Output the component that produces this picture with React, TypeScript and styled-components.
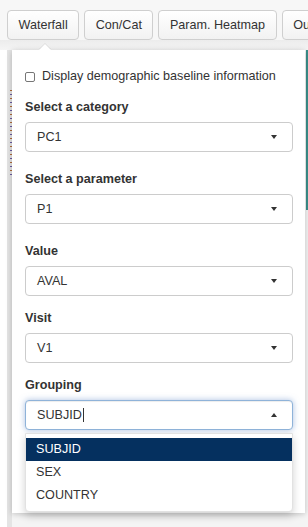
import React from "react";
import styled, { createGlobalStyle } from "styled-components";

const GlobalStyle = createGlobalStyle`
  * { box-sizing: border-box; }
  body {
    margin: 0;
    background: #f7f7f7;
    font-family: "Liberation Sans", Arial, sans-serif;
    color: #333;
    font-size: 12.6px;
  }
`;

const tabs = ["Waterfall", "Con/Cat", "Param. Heatmap", "Outliers"];

const fields = [
  { label: "Select a category", value: "PC1", gap: 17 },
  { label: "Select a parameter", value: "P1", gap: 17 },
  { label: "Value", value: "AVAL", gap: 12 },
  { label: "Visit", value: "V1", gap: 12 },
];

const options = ["SUBJID", "SEX", "COUNTRY"];

export default function App() {
  return (
    <>
      <GlobalStyle />
      <Page>
        <TabBar>
          {tabs.map((t) => (
            <TabButton key={t}>{t}</TabButton>
          ))}
        </TabBar>

        <Stage>
          <Gutter />
          <AxisStrip>
            <AxisDots />
          </AxisStrip>
          <PlotArea>
            <TealEdge />
          </PlotArea>

          <Popover>
            <Arrow />
            <CheckRow>
              <CheckBox />
              <span>Display demographic baseline information</span>
            </CheckRow>

            {fields.map((f) => (
              <Group key={f.label} $gap={f.gap}>
                <Label>{f.label}</Label>
                <SelectBox>
                  <span>{f.value}</span>
                  <Caret />
                </SelectBox>
              </Group>
            ))}

            <Group $gap={0}>
              <Label>Grouping</Label>
              <SelectBox $focused>
                <span>
                  SUBJID<Cursor />
                </span>
                <Caret $up />
              </SelectBox>
              <Dropdown>
                {options.map((o, i) => (
                  <Option key={o} $active={i === 0}>
                    {o}
                  </Option>
                ))}
              </Dropdown>
            </Group>
          </Popover>
        </Stage>
      </Page>
    </>
  );
}

const Page = styled.div`
  width: 308px;
  height: 527px;
  overflow: hidden;
  display: flex;
  flex-direction: column;
`;

const TabBar = styled.div`
  display: flex;
  gap: 5px;
  padding: 10px 0 0 7px;
  height: 40px;
  white-space: nowrap;
  overflow: hidden;
`;

const TabButton = styled.button`
  flex: none;
  height: 30px;
  padding: 0 10.5px;
  border: 1px solid #cfcfcf;
  border-radius: 4px;
  background: linear-gradient(#ffffff, #f2f2f2);
  font-family: inherit;
  font-size: 12.6px;
  color: #333;
`;

const Stage = styled.div`
  position: relative;
  flex: 1;
  display: flex;
  background: linear-gradient(#ececec 0, #f5f5f5 10px);
`;

const Gutter = styled.div`
  width: 7px;
  margin-top: 10px;
  background: #fff;
`;

const AxisStrip = styled.div`
  width: 5px;
  margin-top: 10px;
  background: #e4e4e4;
  padding-top: 40px;
  display: flex;
  justify-content: flex-end;
`;

const AxisDots = styled.div`
  width: 2px;
  height: 85px;
  background: repeating-linear-gradient(
    #b06a3a 0 1px,
    transparent 1px 4px,
    #6a5aa0 4px 5px,
    transparent 5px 8px
  );
`;

const PlotArea = styled.div`
  flex: 1;
  margin-top: 10px;
  display: flex;
  justify-content: flex-end;
  background: #f4f4f4;
`;

const TealEdge = styled.div`
  width: 2px;
  height: 160px;
  background: #3a8f8a;
`;

const Popover = styled.div`
  position: absolute;
  top: 10px;
  left: 12px;
  width: 293px;
  height: 463px;
  background: #fff;
  box-shadow: 0 1px 6px rgba(0, 0, 0, 0.22);
  padding: 16px 12px 0 13px;
`;

const Arrow = styled.div`
  position: absolute;
  top: -6px;
  left: 27px;
  width: 0;
  height: 0;
  border-left: 6px solid transparent;
  border-right: 6px solid transparent;
  border-bottom: 6px solid #fff;
  filter: drop-shadow(0 -1px 0 rgba(0, 0, 0, 0.08));
`;

const CheckRow = styled.label`
  display: flex;
  align-items: center;
  gap: 7px;
  height: 20px;
  margin-bottom: 11px;
`;

const CheckBox = styled.span`
  width: 10px;
  height: 10px;
  margin-top: 1px;
  border: 1px solid #767676;
  border-radius: 2px;
  background: #fff;
`;

const Group = styled.div<{ $gap: number }>`
  display: flex;
  flex-direction: column;
  margin-bottom: ${(p) => p.$gap}px;
`;

const Label = styled.div`
  font-weight: bold;
  line-height: 20px;
  margin-bottom: 5px;
`;

const SelectBox = styled.div<{ $focused?: boolean }>`
  height: 30px;
  display: flex;
  align-items: center;
  justify-content: space-between;
  padding: 0 15px 0 11px;
  border: 1px solid ${(p) => (p.$focused ? "#8fb3d9" : "#ccc")};
  border-radius: 4px;
  background: #fff;
  box-shadow: ${(p) =>
    p.$focused
      ? "inset 0 1px 1px rgba(0,0,0,.075), 0 0 6px rgba(102,140,200,.55)"
      : "none"};
`;

const Caret = styled.span<{ $up?: boolean }>`
  width: 0;
  height: 0;
  border-left: 3.5px solid transparent;
  border-right: 3.5px solid transparent;
  ${(p) =>
    p.$up ? "border-bottom: 4px solid #333;" : "border-top: 4px solid #333;"}
`;

const Cursor = styled.span`
  display: inline-block;
  width: 1px;
  height: 14px;
  margin-left: 1px;
  vertical-align: -3px;
  background: #333;
`;

const Dropdown = styled.div`
  margin-top: 3px;
  height: 79px;
  padding-top: 4px;
  border: 1px solid #e2e2e2;
  border-radius: 0 0 4px 4px;
  background: #fff;
  box-shadow: 0 4px 8px rgba(0, 0, 0, 0.18);
`;

const Option = styled.div<{ $active?: boolean }>`
  height: 23px;
  line-height: 23px;
  padding-left: 10px;
  color: ${(p) => (p.$active ? "#fff" : "#333")};
  background: ${(p) => (p.$active ? "#05305f" : "transparent")};
`;
